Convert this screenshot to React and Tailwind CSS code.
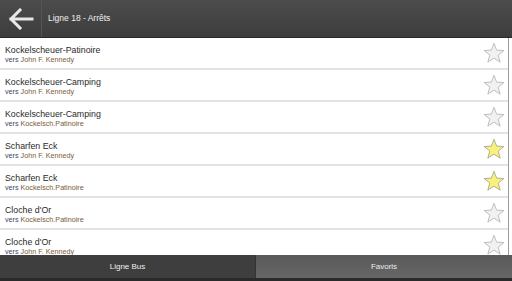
import React from "react";

const rows = [
  { t: "Kockelscheuer-Patinoire", d: "John F. Kennedy", fav: false },
  { t: "Kockelscheuer-Camping", d: "John F. Kennedy", fav: false },
  { t: "Kockelscheuer-Camping", d: "Kockelsch.Patinoire", fav: false },
  { t: "Scharfen Eck", d: "John F. Kennedy", fav: true },
  { t: "Scharfen Eck", d: "Kockelsch.Patinoire", fav: true },
  { t: "Cloche d'Or", d: "Kockelsch.Patinoire", fav: false },
  { t: "Cloche d'Or", d: "John F. Kennedy", fav: false },
];

function Star({ fav }) {
  return (
    <svg width="22" height="22" viewBox="0 0 24 23">
      <polygon
        points="12,1 14.9,8.4 22.8,8.8 16.6,13.8 18.7,21.5 12,17.1 5.3,21.5 7.4,13.8 1.2,8.8 9.1,8.4"
        fill={fav ? "#f9f27a" : "#f1f1f1"}
        stroke={fav ? "#a8a890" : "#b8b8b8"}
        strokeWidth="1"
        strokeLinejoin="round"
      />
    </svg>
  );
}

export default function App() {
  return (
    <div
      className="w-[512px] h-[281px] flex flex-col overflow-hidden bg-white"
      style={{ fontFamily: '"Liberation Sans", Arial, sans-serif' }}
    >
      <div className="h-[38px] shrink-0 flex bg-gradient-to-b from-[#4c4c4c] to-[#3d3d3d] border-b border-[#2a2a2a]">
        <div className="w-[42px] flex items-center justify-center border-r border-[#555]">
          <svg width="26" height="22" viewBox="0 0 26 22">
            <path d="M24 11H3M12 2L3 11l9 9" fill="none" stroke="#e8e8e8" strokeWidth="3" strokeLinecap="square" />
          </svg>
        </div>
        <div className="flex items-center pl-[6px] text-[8.5px] text-[#f0f0f0]">Ligne 18 - Arrêts</div>
      </div>
      <div className="flex-1 flex overflow-hidden">
        <div className="w-[508px] flex flex-col">
          {rows.map((r, i) => (
            <div key={i} className="h-[32px] shrink-0 flex items-center border-b-2 border-[#e3e3e3] pl-[5px] pr-[3px]">
              <div className="flex-1 flex flex-col leading-none pt-[3px]">
                <div className="text-[8.8px] text-[#2a2a2a]">{r.t}</div>
                <div className="text-[7.2px] mt-[2px]">
                  <span className="text-[#3a4a6e]">vers </span>
                  <span className="text-[#7a5a3a]">{r.d}</span>
                </div>
              </div>
              <Star fav={r.fav} />
            </div>
          ))}
        </div>
        <div className="w-[1px] bg-[#9a9a9a]" />
        <div className="flex-1 bg-white" />
      </div>
      <div className="h-[26px] shrink-0 flex text-[8px] text-[#eeeeee] border-b-[3px] border-[#2a2a2a]">
        <div className="w-[256px] flex items-center justify-center bg-[#3e3e3e] border-r border-[#333]">Ligne Bus</div>
        <div className="flex-1 flex items-center justify-center bg-gradient-to-b from-[#5a5a5a] to-[#666]">Favoris</div>
      </div>
    </div>
  );
}
